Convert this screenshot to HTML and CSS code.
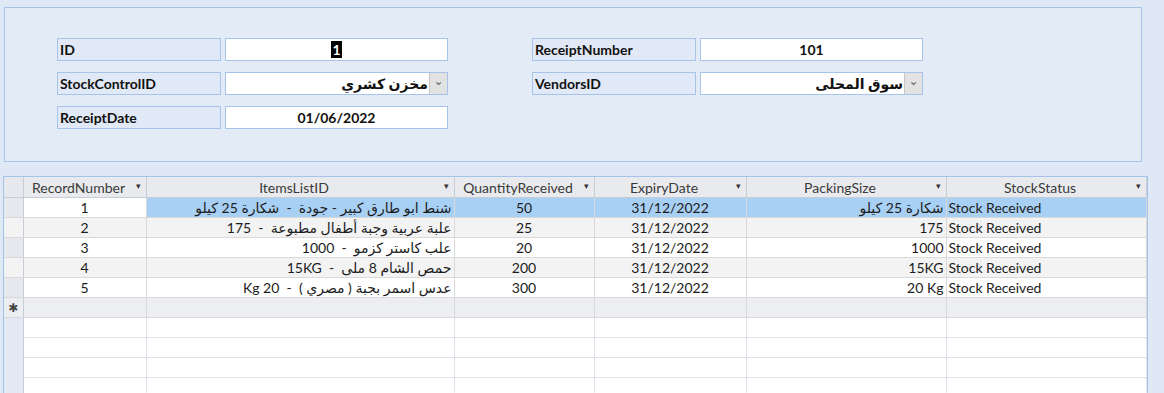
FILE: index.html
```html
<!DOCTYPE html>
<html lang="ar">
<head>
    <meta charset="UTF-8">
    <title>StockReceipt</title>
    <link rel="stylesheet" href="styles.css">
</head>
<body>
<div class="form-box">
    <div class="fields">
        <div class="group">
            <div class="lbl">ID</div>
            <div class="val"><span class="sel">1</span></div>
            <div class="lbl">StockControlID</div>
            <div class="val combo"><span class="ar">مخزن كشري</span><span class="drop">&#8964;</span></div>
            <div class="lbl">ReceiptDate</div>
            <div class="val">01/06/2022</div>
        </div>
        <div class="group">
            <div class="lbl">ReceiptNumber</div>
            <div class="val">101</div>
            <div class="lbl">VendorsID</div>
            <div class="val combo"><span class="ar">سوق المحلى</span><span class="drop">&#8964;</span></div>
        </div>
    </div>
</div>

<div class="sheet">
    <table class="grid">
        <colgroup>
            <col style="width:19px">
            <col style="width:123px">
            <col style="width:308px">
            <col style="width:140px">
            <col style="width:152px">
            <col style="width:200px">
            <col style="width:200px">
        </colgroup>
        <thead>
        <tr>
            <th class="rs"></th>
            <th>RecordNumber<i>&#9662;</i></th>
            <th>ItemsListID<i>&#9662;</i></th>
            <th>QuantityReceived<i>&#9662;</i></th>
            <th>ExpiryDate<i>&#9662;</i></th>
            <th>PackingSize<i>&#9662;</i></th>
            <th>StockStatus<i>&#9662;</i></th>
        </tr>
        </thead>
        <tbody>
        <tr class="cur">
            <td class="rs"></td>
            <td class="c focus">1</td>
            <td class="r" dir="rtl">شنط ابو طارق كبير - جودة&nbsp; - &nbsp;شكارة 25 كيلو</td>
            <td class="c">50</td>
            <td class="c">31/12/2022</td>
            <td class="r" dir="rtl">شكارة 25 كيلو</td>
            <td>Stock Received</td>
        </tr>
        <tr class="alt">
            <td class="rs"></td>
            <td class="c">2</td>
            <td class="r" dir="rtl">علبة عربية وجبة أطفال مطبوعة&nbsp; - &nbsp;175</td>
            <td class="c">25</td>
            <td class="c">31/12/2022</td>
            <td class="r">175</td>
            <td>Stock Received</td>
        </tr>
        <tr>
            <td class="rs"></td>
            <td class="c">3</td>
            <td class="r" dir="rtl">علب كاستر كزمو&nbsp; - &nbsp;1000</td>
            <td class="c">20</td>
            <td class="c">31/12/2022</td>
            <td class="r">1000</td>
            <td>Stock Received</td>
        </tr>
        <tr class="alt">
            <td class="rs"></td>
            <td class="c">4</td>
            <td class="r" dir="rtl">حمص الشام 8 ملى&nbsp; - &nbsp;15KG</td>
            <td class="c">200</td>
            <td class="c">31/12/2022</td>
            <td class="r">15KG</td>
            <td>Stock Received</td>
        </tr>
        <tr>
            <td class="rs"></td>
            <td class="c">5</td>
            <td class="r" dir="rtl">عدس اسمر بجبة ( مصري )&nbsp; - &nbsp;20 Kg</td>
            <td class="c">300</td>
            <td class="c">31/12/2022</td>
            <td class="r">20 Kg</td>
            <td>Stock Received</td>
        </tr>
        <tr class="new">
            <td class="rs">&#10033;</td>
            <td></td><td></td><td></td><td></td><td></td><td></td>
        </tr>
        <tr class="empty"><td class="rs"></td><td></td><td></td><td></td><td></td><td></td><td></td></tr>
        <tr class="empty"><td class="rs"></td><td></td><td></td><td></td><td></td><td></td><td></td></tr>
        <tr class="empty"><td class="rs"></td><td></td><td></td><td></td><td></td><td></td><td></td></tr>
        <tr class="empty"><td class="rs"></td><td></td><td></td><td></td><td></td><td></td><td></td></tr>
        </tbody>
    </table>
</div>
</body>
</html>
```

FILE: styles.css
```css
body {
    margin: 0;
    background-color: #dfe8f5;
    font-family: "Lato", "DejaVu Sans", sans-serif;
    color: #1c1c1c;
    height: 393px;
    overflow: hidden;
}

.form-box {
    width: 1136px;
    height: 153px;
    margin: 7px 0 0 4px;
    border: 1px solid #a6c3ea;
    background-color: #e3ebf7;
}

.fields {
    display: flex;
    gap: 84px;
    padding: 30px 0 0 52px;
}

.group {
    display: grid;
    grid-template-columns: 164px 223px;
    grid-auto-rows: 23px;
    column-gap: 4px;
    row-gap: 11px;
}

.lbl {
    border: 1px solid #a6c3ea;
    background-color: #e1e9f6;
    font-weight: bold;
    font-size: 14px;
    line-height: 21px;
    padding-left: 2px;
    color: #111;
}

.val {
    border: 1px solid #a6c3ea;
    background-color: #fff;
    font-weight: bold;
    font-size: 14px;
    line-height: 21px;
    text-align: center;
    color: #111;
}

.val .sel {
    background-color: #000;
    color: #fff;
    padding: 0 1px;
}

.combo {
    display: flex;
    justify-content: flex-end;
}

.combo .ar {
    font-size: 14px;
    padding-right: 1px;
}

.combo .drop {
    width: 17px;
    background-color: #e2e2e2;
    border-left: 1px solid #c6c6c6;
    color: #666;
    font-size: 12px;
    line-height: 16px;
    font-weight: normal;
    text-align: center;
}

.sheet {
    margin: 14px 0 0 3px;
    width: 1143px;
    border-left: 1px solid #a6c3ea;
    border-right: 1px solid #a6c3ea;
    border-top: 1px solid #a6c3ea;
    background-color: #eef0f5;
}

.grid {
    border-collapse: collapse;
    table-layout: fixed;
    font-size: 14px;
}

.grid th {
    height: 20px;
    padding: 0 16px 0 4px;
    background-color: #e9eaee;
    border-right: 1px solid #c8ccd6;
    border-bottom: 1px solid #c8ccd6;
    font-weight: normal;
    color: #3a3a3a;
    position: relative;
    white-space: nowrap;
}

.grid th i {
    position: absolute;
    right: 5px;
    top: 3px;
    font-style: normal;
    font-size: 9px;
    color: #333;
}

.grid td {
    height: 19px;
    padding: 0 2px;
    line-height: 19px;
    border-right: 1px solid #d9d9d9;
    border-bottom: 1px solid #d9d9d9;
    background-color: #fff;
    white-space: nowrap;
    overflow: hidden;
    color: #1c1c1c;
}

.grid td.c {
    text-align: center;
}

.grid td.r {
    text-align: right;
}

.grid td.rs,
.grid th.rs {
    background-color: #e6e8ee;
    border-right: 1px solid #c8ccd6;
    padding: 0;
    text-align: center;
    color: #444;
    font-size: 12px;
}

.grid tr.alt td {
    background-color: #f3f3f4;
}

.grid tr.cur td {
    background-color: #a8d0f5;
}

.grid tr.cur td.focus {
    background-color: #fff;
}

.grid tr.cur td.rs {
    background-color: #e6e8ee;
}

.grid tr.new td {
    background-color: #eceef2;
}

.grid tr.empty td {
    border-right: 1px dotted #e2d0e4;
    border-bottom: 1px dotted #d0d4de;
}

.grid tr.empty td.rs {
    background-color: #e2e8f4;
    border-bottom: none;
    border-right: 1px solid #c8ccd6;
}
```
